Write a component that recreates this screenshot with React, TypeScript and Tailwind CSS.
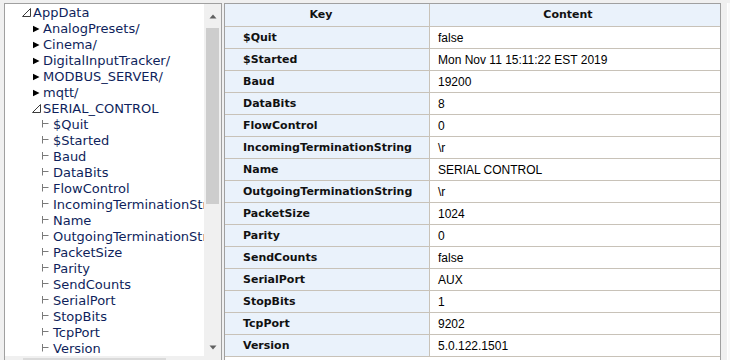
type TreeNode = {
  label: string;
  level: number;
  kind: "open" | "closed" | "leaf";
};

const tree: TreeNode[] = [
  { label: "AppData", level: 0, kind: "open" },
  { label: "AnalogPresets/", level: 1, kind: "closed" },
  { label: "Cinema/", level: 1, kind: "closed" },
  { label: "DigitalInputTracker/", level: 1, kind: "closed" },
  { label: "MODBUS_SERVER/", level: 1, kind: "closed" },
  { label: "mqtt/", level: 1, kind: "closed" },
  { label: "SERIAL_CONTROL", level: 1, kind: "open" },
  { label: "$Quit", level: 2, kind: "leaf" },
  { label: "$Started", level: 2, kind: "leaf" },
  { label: "Baud", level: 2, kind: "leaf" },
  { label: "DataBits", level: 2, kind: "leaf" },
  { label: "FlowControl", level: 2, kind: "leaf" },
  { label: "IncomingTerminationString", level: 2, kind: "leaf" },
  { label: "Name", level: 2, kind: "leaf" },
  { label: "OutgoingTerminationString", level: 2, kind: "leaf" },
  { label: "PacketSize", level: 2, kind: "leaf" },
  { label: "Parity", level: 2, kind: "leaf" },
  { label: "SendCounts", level: 2, kind: "leaf" },
  { label: "SerialPort", level: 2, kind: "leaf" },
  { label: "StopBits", level: 2, kind: "leaf" },
  { label: "TcpPort", level: 2, kind: "leaf" },
  { label: "Version", level: 2, kind: "leaf" },
];

const rows: [string, string][] = [
  ["$Quit", "false"],
  ["$Started", "Mon Nov 11 15:11:22 EST 2019"],
  ["Baud", "19200"],
  ["DataBits", "8"],
  ["FlowControl", "0"],
  ["IncomingTerminationString", "\\r"],
  ["Name", "SERIAL CONTROL"],
  ["OutgoingTerminationString", "\\r"],
  ["PacketSize", "1024"],
  ["Parity", "0"],
  ["SendCounts", "false"],
  ["SerialPort", "AUX"],
  ["StopBits", "1"],
  ["TcpPort", "9202"],
  ["Version", "5.0.122.1501"],
];

const indent = ["pl-[16px]", "pl-[26px]", "pl-[36px]"];

// tree glyphs: expanded / collapsed / leaf connector
const NodeIcon = ({ kind }: { kind: TreeNode["kind"] }) => {
  if (kind === "open")
    return (
      <svg width="12" height="16" viewBox="0 0 12 16">
        <polygon points="1.5,11.5 9.5,11.5 9.5,3.5" fill="#ffffff" stroke="#3c3c3c" strokeWidth="1" />
      </svg>
    );
  if (kind === "closed")
    return (
      <svg width="12" height="16" viewBox="0 0 12 16">
        <polygon points="2,4.7 8.5,8 2,11.3" fill="#000000" />
      </svg>
    );
  return (
    <svg width="12" height="16" viewBox="0 0 12 16">
      <path d="M1.5 3v7.5M1.5 6.5h6" stroke="#7a7a7a" strokeWidth="1" fill="none" />
    </svg>
  );
};

const TreePanel = () => (
  <div className="w-[218px] h-[380px] shrink-0 border border-[#a0a0a0] bg-white flex flex-col">
    <div className="flex h-[352px]">
      <div className="w-[199px] overflow-hidden pt-[1px] font-['DejaVu_Sans',Verdana,sans-serif] text-[13px] leading-[16px] text-[#0f1f5c]">
        {tree.map((n) => (
          <div key={n.label} className={`flex items-center h-[16px] whitespace-nowrap ${indent[n.level]}`}>
            <span className="w-[12px] h-[16px] shrink-0">
              <NodeIcon kind={n.kind} />
            </span>
            <span>{n.label}</span>
          </div>
        ))}
      </div>
      <div className="w-[17px] bg-[#f0f0f0] flex flex-col items-center">
        <div className="h-[24px] w-full flex items-center justify-center">
          <svg width="8" height="5" viewBox="0 0 8 5">
            <polygon points="0.5,4.5 4,0.5 7.5,4.5" fill="#606060" />
          </svg>
        </div>
        <div className="w-[13px] h-[176px] bg-[#cdcdcd]" />
        <div className="flex-1" />
        <div className="h-[17px] w-full flex items-center justify-center">
          <svg width="8" height="5" viewBox="0 0 8 5">
            <polygon points="0.5,0.5 7.5,0.5 4,4.5" fill="#606060" />
          </svg>
        </div>
      </div>
    </div>
    <div className="h-[17px] bg-[#f0f0f0] flex items-start pt-[2px] pl-[18px]">
      <div className="w-[143px] h-[13px] bg-[#dadada]" />
    </div>
  </div>
);

const TablePanel = () => (
  <div className="w-[497px] h-[380px] shrink-0 border border-[#a0a0a0] bg-white">
    <div className="flex h-[23px] border-b border-[#c8c2b8] bg-[#eaf2fb] font-['DejaVu_Sans',Verdana,sans-serif] text-[11px] font-bold text-[#111111]">
      <div className="w-[205px] border-r border-[#c8c2b8] flex items-center justify-center pr-[12px]">Key</div>
      <div className="flex-1 flex items-center justify-center pr-[14px]">Content</div>
    </div>
    {rows.map(([k, v]) => (
      <div key={k} className="flex h-[22px] border-b border-[#c8c2b8]">
        <div className="w-[205px] border-r border-[#c8c2b8] bg-[#eaf2fb] flex items-center pl-[18px] pt-[1px] font-['DejaVu_Sans',Verdana,sans-serif] text-[11px] font-bold text-[#111111] whitespace-nowrap overflow-hidden">
          {k}
        </div>
        <div className="flex-1 flex items-center pl-[8px] font-['Liberation_Sans',Arial,sans-serif] text-[12px] text-black whitespace-nowrap">
          {v}
        </div>
      </div>
    ))}
  </div>
);

export default function App() {
  return (
    <div className="w-[730px] h-[360px] overflow-hidden bg-[#f0f0f0] flex items-start pt-[3px] pl-[4px] gap-[2px]">
      <TreePanel />
      <TablePanel />
      <div className="flex-1 h-full flex justify-end">
        <div className="w-[3px] h-full bg-[#fafafa] border-l border-[#ffffff]" />
      </div>
    </div>
  );
}
